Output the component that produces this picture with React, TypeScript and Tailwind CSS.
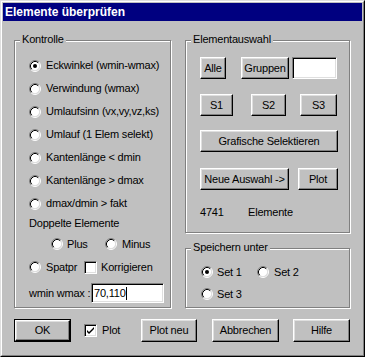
import React from "react";

const raised =
  "flex items-center justify-center border border-t-white border-l-white border-r-black border-b-black shadow-[inset_-1px_-1px_0_#808080,inset_1px_1px_0_#dfdfdf] bg-[#c0c0c0]";
const sunken =
  "border border-t-[#808080] border-l-[#808080] border-r-white border-b-white shadow-[inset_1px_1px_0_#000,inset_-1px_-1px_0_#dfdfdf] bg-white";

const Radio: React.FC<{ checked?: boolean }> = ({ checked }) => (
  <svg width="12" height="12" viewBox="0 0 12 12" className="shrink-0">
    <circle cx="6" cy="6" r="4.5" fill="#fff" />
    <path d="M2.11 9.89 A5.5 5.5 0 0 1 9.89 2.11" fill="none" stroke="#808080" />
    <path d="M9.89 2.11 A5.5 5.5 0 0 1 2.11 9.89" fill="none" stroke="#fff" />
    <path d="M2.82 9.18 A4.5 4.5 0 0 1 9.18 2.82" fill="none" stroke="#000" />
    <path d="M9.18 2.82 A4.5 4.5 0 0 1 2.82 9.18" fill="none" stroke="#dfdfdf" />
    {checked && <circle cx="6" cy="6" r="2" fill="#000" />}
  </svg>
);

const Check: React.FC<{ checked?: boolean }> = ({ checked }) => (
  <div className={`w-[13px] h-[13px] shrink-0 flex items-center justify-center ${sunken}`}>
    {checked && (
      <svg width="9" height="9" viewBox="0 0 9 9">
        <path d="M1 4 L3 6 L8 1 L8 3 L3 8 L1 6 Z" fill="#000" />
      </svg>
    )}
  </div>
);

const Group: React.FC<{ title: string; className: string; children: React.ReactNode }> = ({
  title,
  className,
  children,
}) => (
  <div
    className={`relative border border-[#808080] shadow-[inset_1px_1px_0_#fff,1px_1px_0_#fff] ${className}`}
  >
    <span className="absolute left-[5px] top-[-8px] px-[2px] bg-[#c0c0c0] leading-[13px]">{title}</span>
    {children}
  </div>
);

const RadioRow: React.FC<{ label: string; checked?: boolean }> = ({ label, checked }) => (
  <div className="flex items-center h-[23px] gap-[5px]">
    <Radio checked={checked} />
    <span>{label}</span>
  </div>
);

export default function App() {
  return (
    <div className="w-[365px] h-[357px] bg-[#c0c0c0] border border-t-[#dfdfdf] border-l-[#dfdfdf] border-r-black border-b-black font-['Liberation_Sans',Arial,sans-serif] text-[11px] tracking-[-0.2px] text-black leading-[13px] whitespace-nowrap">
      <div className="h-full border border-t-white border-l-white border-r-[#808080] border-b-[#808080] p-[1px]">
        <div className="h-[18px] bg-[#000080] text-white font-bold text-[12px] tracking-normal pl-[2px] flex items-center">
          Elemente überprüfen
        </div>

        <div className="pl-[11px] pt-[19px]">
          <div className="flex">
            <Group title="Kontrolle" className="w-[157px] h-[268px] pl-[14px] pt-[13px]">
              <RadioRow label="Eckwinkel (wmin-wmax)" checked />
              <RadioRow label="Verwindung (wmax)" />
              <RadioRow label="Umlaufsinn (vx,vy,vz,ks)" />
              <RadioRow label="Umlauf (1 Elem selekt)" />
              <RadioRow label="Kantenlänge < dmin" />
              <RadioRow label="Kantenlänge > dmax" />
              <RadioRow label="dmax/dmin > fakt" />
              <div className="h-[16px] flex items-center">Doppelte Elemente</div>
              <div className="h-[26px] flex items-center pl-[22px]">
                <div className="w-[54px] flex items-center gap-[4px]">
                  <Radio />
                  <span>Plus</span>
                </div>
                <div className="flex items-center gap-[5px]">
                  <Radio />
                  <span>Minus</span>
                </div>
              </div>
              <div className="h-[20px] flex items-center">
                <div className="w-[55px] flex items-center gap-[5px]">
                  <Radio />
                  <span>Spatpr</span>
                </div>
                <div className="flex items-center gap-[4px]">
                  <Check />
                  <span>Korrigieren</span>
                </div>
              </div>
              <div className="mt-[6px] flex items-center">
                <span className="w-[62px] shrink-0">wmin wmax :</span>
                <div className={`w-[73px] h-[20px] shrink-0 flex items-center pl-[2px] ${sunken}`}>
                  <span>70,110</span>
                  <span className="w-[1px] h-[13px] bg-black" />
                </div>
              </div>
            </Group>

            <div className="ml-[14px] w-[165px] flex flex-col">
              <Group title="Elementauswahl" className="h-[193px] pl-[14px] pt-[16px]">
                <div className="flex h-[22px]">
                  <div className={`w-[26px] ${raised}`}>Alle</div>
                  <div className={`ml-[15px] w-[48px] ${raised}`}>Gruppen</div>
                  <div className={`ml-[3px] w-[45px] ${sunken}`} />
                </div>
                <div className="flex h-[22px] mt-[15px]">
                  <div className={`w-[33px] ${raised}`}>S1</div>
                  <div className={`ml-[18px] w-[35px] ${raised}`}>S2</div>
                  <div className={`ml-[14px] w-[37px] ${raised}`}>S3</div>
                </div>
                <div className={`mt-[14px] h-[22px] w-[138px] ${raised}`}>Grafische Selektieren</div>
                <div className="flex h-[22px] mt-[16px]">
                  <div className={`w-[89px] ${raised}`}>Neue Auswahl -&gt;</div>
                  <div className={`ml-[9px] w-[40px] ${raised}`}>Plot</div>
                </div>
                <div className="flex items-center h-[14px] mt-[15px]">
                  <span className="w-[48px]">4741</span>
                  <span>Elemente</span>
                </div>
              </Group>

              <Group title="Speichern unter" className="mt-[15px] h-[60px] pl-[15px] pt-[14px]">
                <div className="flex items-center h-[18px]">
                  <div className="w-[56px] flex items-center gap-[4px]">
                    <Radio checked />
                    <span>Set 1</span>
                  </div>
                  <div className="flex items-center gap-[5px]">
                    <Radio />
                    <span>Set 2</span>
                  </div>
                </div>
                <div className="flex items-center h-[18px] mt-[4px] gap-[4px]">
                  <Radio />
                  <span>Set 3</span>
                </div>
              </Group>
            </div>
          </div>

          <div className="flex items-center h-[23px] mt-[11px]">
            <div className="w-[57px] h-[23px] border border-black flex">
              <div className={`flex-1 ${raised}`}>OK</div>
            </div>
            <div className="ml-[13px] w-[57px] flex items-center gap-[5px]">
              <Check checked />
              <span>Plot</span>
            </div>
            <div className={`w-[56px] h-[23px] ${raised}`}>Plot neu</div>
            <div className={`ml-[15px] w-[67px] h-[23px] ${raised}`}>Abbrechen</div>
            <div className={`ml-[14px] w-[57px] h-[23px] ${raised}`}>Hilfe</div>
          </div>
        </div>
      </div>
    </div>
  );
}
